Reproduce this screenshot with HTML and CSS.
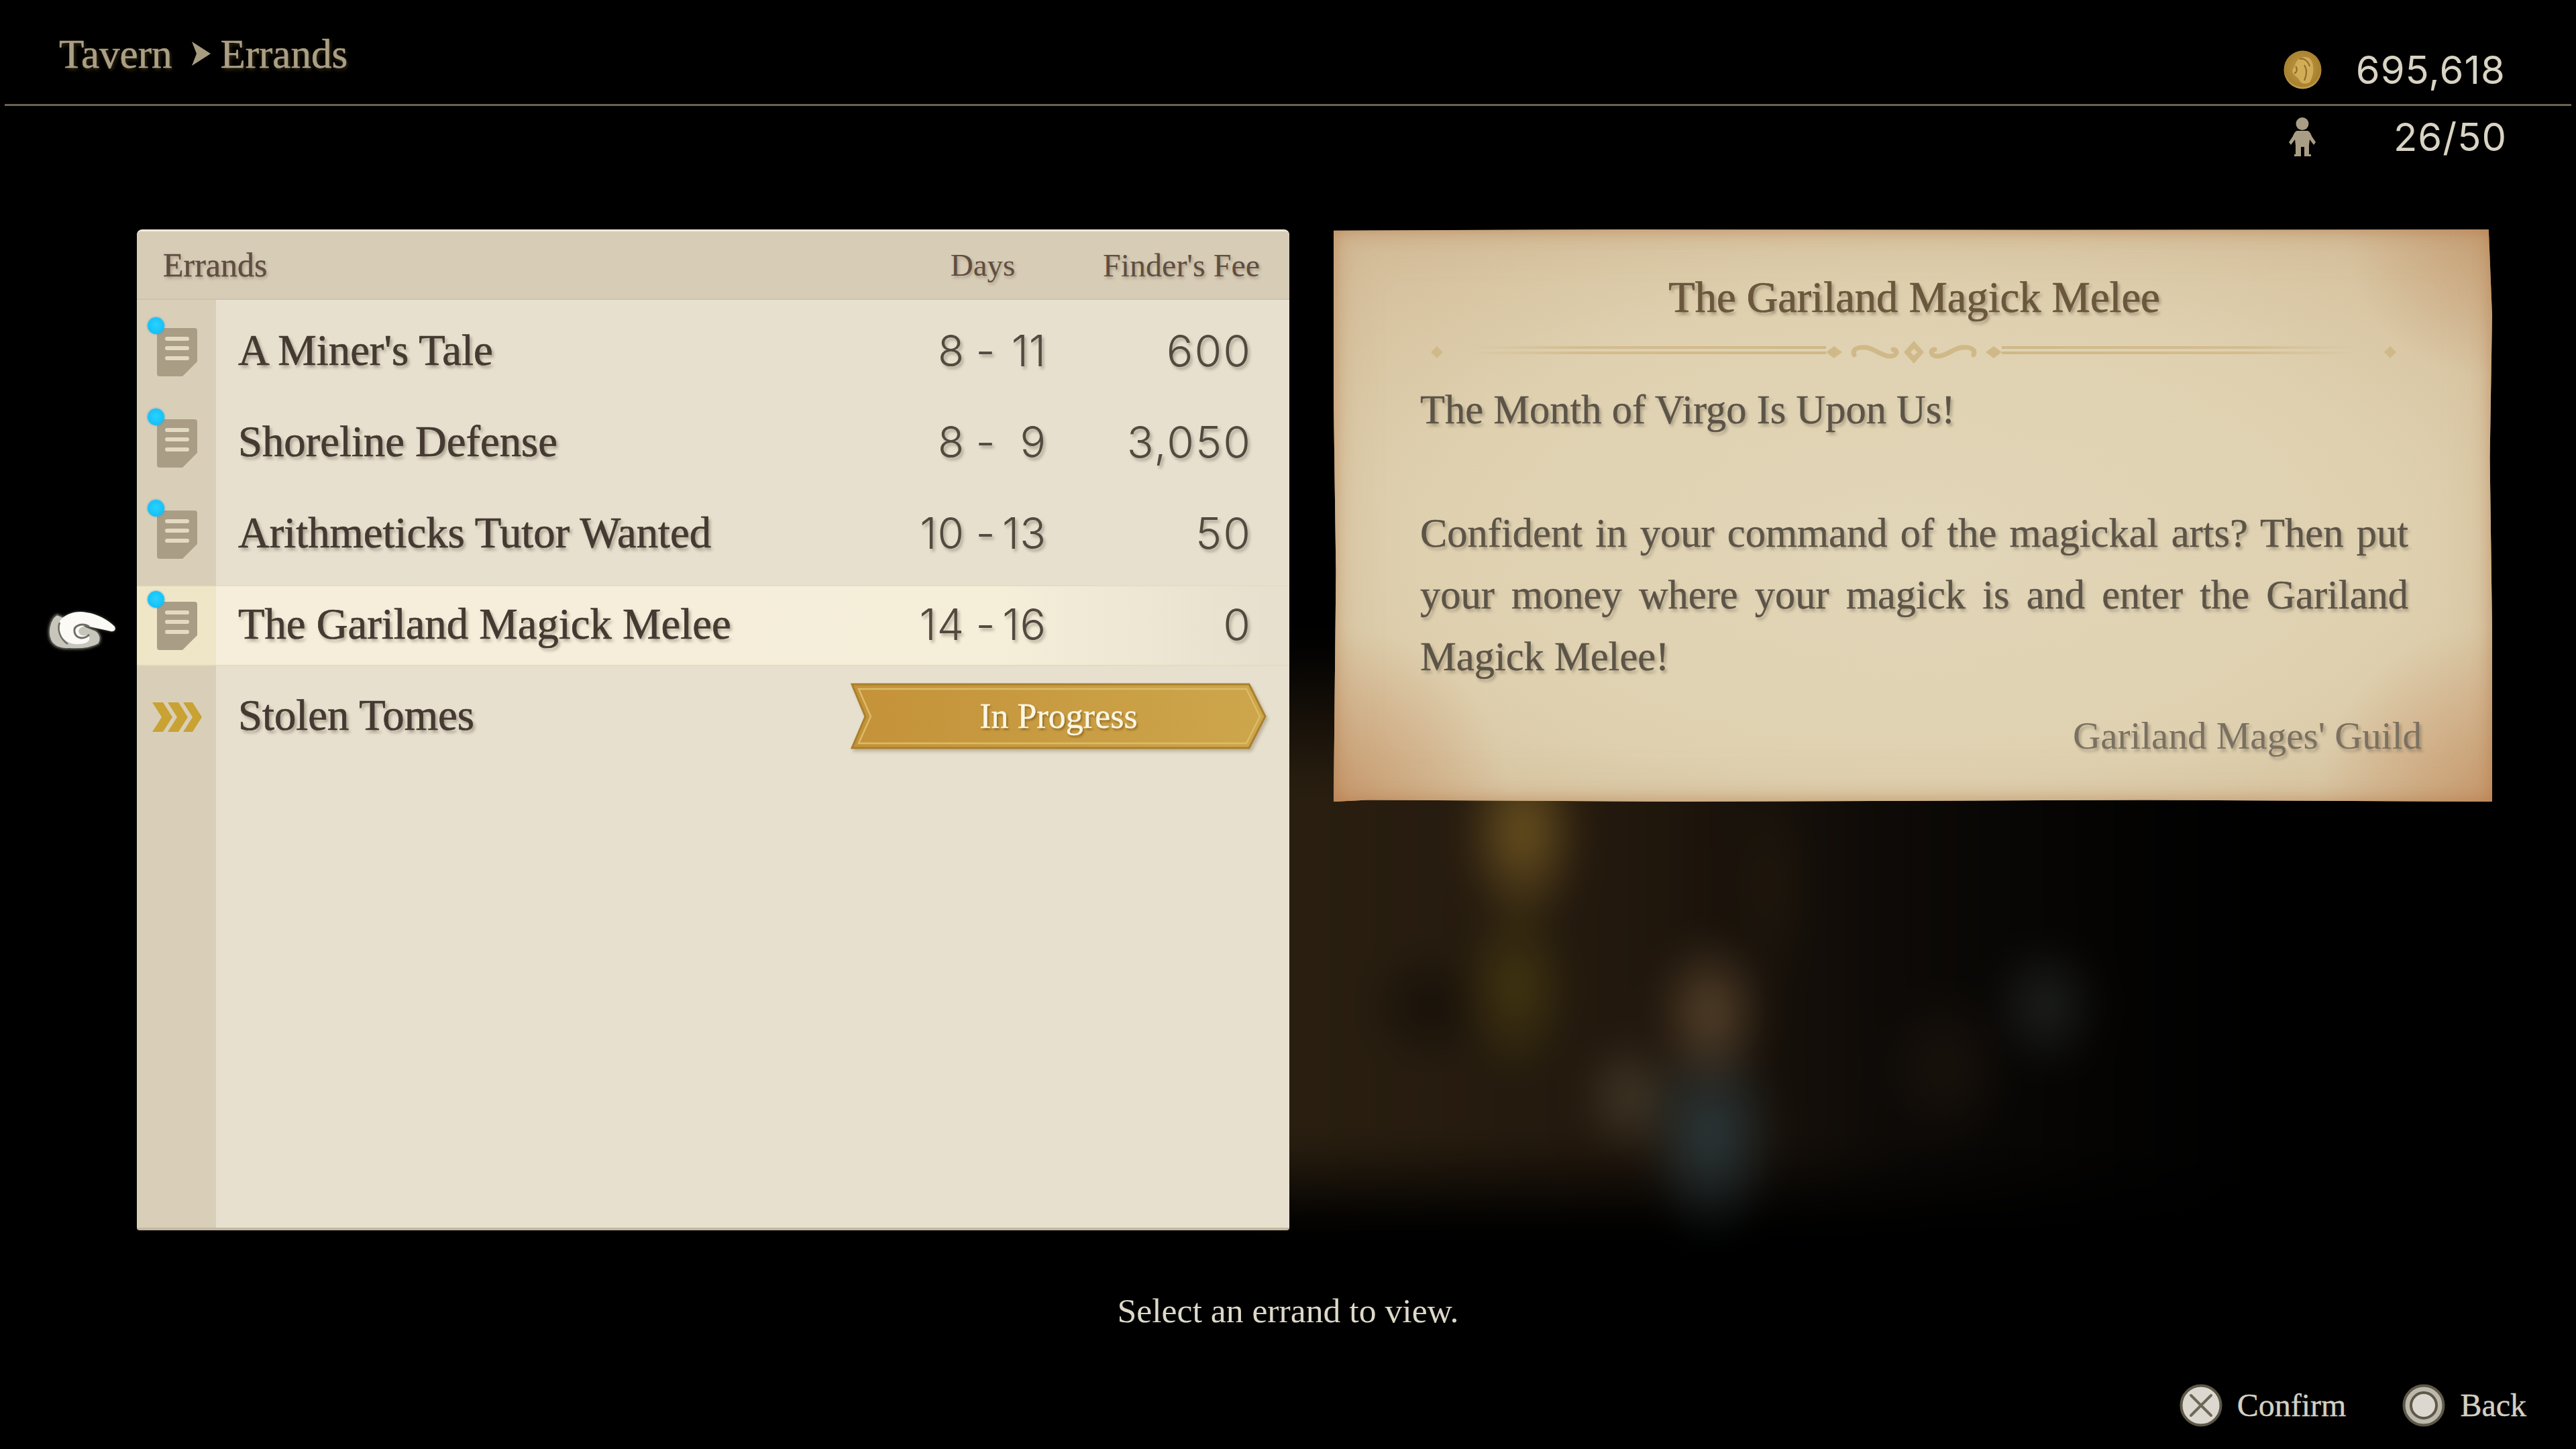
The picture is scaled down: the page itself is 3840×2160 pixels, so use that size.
FILE: index.html
```html
<!DOCTYPE html>
<html lang="en">
<head>
<meta charset="utf-8">
<title>Tavern - Errands</title>
<link rel="stylesheet" href="styles.css">
</head>
<body>
<svg class="defs" width="0" height="0" aria-hidden="true">
  <defs>
    <symbol id="doc" viewBox="0 0 60 72">
      <path d="M4 0H56a4 4 0 0 1 4 4V50L38 72H4a4 4 0 0 1-4-4V4a4 4 0 0 1 4-4Z" fill="#a99d85"/>
      <rect x="12" y="13" width="36" height="6" rx="3" fill="#e4dac3"/>
      <rect x="12" y="27" width="36" height="6" rx="3" fill="#e4dac3"/>
      <rect x="12" y="42" width="36" height="6" rx="3" fill="#e4dac3"/>
    </symbol>
  </defs>
</svg>
<div class="scene"></div>
<header class="topbar">
  <nav class="crumbs">
    <span>Tavern</span>
    <svg class="crumb-arrow" viewBox="0 0 28 36"><path d="M0 0L28 18L0 36L7 18Z" fill="#a89c80"/></svg>
    <span>Errands</span>
  </nav>
  <div class="stat stat-gil">
    <svg class="coin" viewBox="0 0 57 58">
      <defs><radialGradient id="gold" cx=".5" cy=".45" r=".6"><stop offset="0" stop-color="#c29a48"/><stop offset=".8" stop-color="#a8812f"/><stop offset="1" stop-color="#ecd27c"/></radialGradient></defs>
      <ellipse cx="28.500" cy="29" rx="28" ry="28.500" fill="url(#gold)"/>
      <path d="M14 34C12 28 16 26 18 20C21 10 34 7 40 13C47 22 45 38 39 48C32 51 26 50 24 45C22 41 17 38 14 34Z" fill="#d2ad58"/>
      <path d="M24 13C30 11 37 16 39 24M31 22C35 28 35 36 31 45M18 24C21 27 20 34 16 34" fill="none" stroke="#8d6a24" stroke-width="2"/>
    </svg>
    <span class="stat-value">695,618</span>
  </div>
</header>
<div class="rule"></div>
<div class="stat stat-party">
  <svg class="person" viewBox="0 0 42 58">
    <circle cx="21" cy="9.500" r="9.500" fill="#a99d85"/>
    <path d="M13 20H29C32 21 34 25 35 28L41 37L38 41L32 33L31 42V55H34V58H24V44H19V58H9V55H11V42L10 33L4 41L1 37L7 28C8 25 10 21 13 20Z" fill="#a99d85"/>
  </svg>
  <span class="stat-value">26/50</span>
</div>
<main class="content">
  <section class="panel">
    <div class="panel-head">
      <span class="head-name">Errands</span>
      <span class="head-days">Days</span>
      <span class="head-fee">Finder's Fee</span>
    </div>
    <div class="list">
      <div class="row">
        <div class="doc"><svg class="doc-icon"><use href="#doc"/></svg><i class="dot"></i></div>
        <span class="name">A Miner's Tale</span>
        <span class="days"><b>8</b><em>-</em><b>11</b></span>
        <span class="fee">600</span>
      </div>
      <div class="row">
        <div class="doc"><svg class="doc-icon"><use href="#doc"/></svg><i class="dot"></i></div>
        <span class="name">Shoreline Defense</span>
        <span class="days"><b>8</b><em>-</em><b>9</b></span>
        <span class="fee">3,050</span>
      </div>
      <div class="row">
        <div class="doc"><svg class="doc-icon"><use href="#doc"/></svg><i class="dot"></i></div>
        <span class="name">Arithmeticks Tutor Wanted</span>
        <span class="days"><b>10</b><em>-</em><b>13</b></span>
        <span class="fee">50</span>
      </div>
      <div class="row row-selected">
        <div class="doc"><svg class="doc-icon"><use href="#doc"/></svg><i class="dot"></i></div>
        <span class="name">The Gariland Magick Melee</span>
        <span class="days"><b>14</b><em>-</em><b>16</b></span>
        <span class="fee">0</span>
        <svg class="hand" viewBox="0 0 102 58">
          <path d="M14 6C3 12-1 32 4 44C8 54 20 58 32 57C50 58 66 56 76 50C80 44 80 36 72 30Z" fill="#c8c6bc" stroke="#4a4a44" stroke-width="2"/>
          <path d="M18 16C26 4 44 0 58 3C74 5 90 14 100 24C102 29 100 32 94 31C84 29 72 26 62 24C56 22 48 24 46 30C46 36 52 40 60 36C66 43 60 50 48 50C34 52 22 44 18 34Z" fill="#fbfaf5"/>
          <path d="M62 24C52 18 38 22 40 32C42 42 54 44 62 36" fill="none" stroke="#6f6e66" stroke-width="3"/>
          <path d="M18 18C14 28 18 42 30 50" fill="none" stroke="#6f6e66" stroke-width="2.500"/>
        </svg>
      </div>
      <div class="row row-active">
        <svg class="chevrons" viewBox="0 0 74 44">
          <path d="M0 0H16L30 22L16 44H0L14 22Z M23 0H39L53 22L39 44H23L37 22Z M46 0H60L74 22L60 44H46L60 22Z" fill="#c9a234"/>
        </svg>
        <span class="name">Stolen Tomes</span>
        <div class="badge">
          <svg class="badge-art" viewBox="0 0 616 95" preserveAspectRatio="none">
            <defs><linearGradient id="badgefill" x1="0" x2="1" y1="0" y2="0"><stop offset="0" stop-color="#c49239"/><stop offset="1" stop-color="#cda64b"/></linearGradient></defs>
            <path d="M0 0H592L616 48L592 95H0L20 48Z" fill="url(#badgefill)" stroke="#a9802e" stroke-width="3"/>
            <path d="M10 7H588L608 48L588 88H10L28 48Z" fill="none" stroke="#dcbb68" stroke-width="2.500"/>
          </svg>
          <span class="badge-text">In Progress</span>
        </div>
      </div>
    </div>
  </section>
  <article class="paper">
    <h1 class="paper-title">The Gariland Magick Melee</h1>
    <svg class="ornament" viewBox="0 0 1441 36">
      <defs>
        <linearGradient id="fadeL" x1="0" x2="1" y1="0" y2="0"><stop offset="0" stop-color="#d3bd90" stop-opacity="0"/><stop offset=".3" stop-color="#d3bd90"/><stop offset="1" stop-color="#cfb888"/></linearGradient>
        <linearGradient id="fadeR" x1="1" x2="0" y1="0" y2="0"><stop offset="0" stop-color="#d3bd90" stop-opacity="0"/><stop offset=".3" stop-color="#d3bd90"/><stop offset="1" stop-color="#cfb888"/></linearGradient>
      </defs>
      <g fill="#d0b988">
        <path d="M10 9L19 18L10 27L1 18Z"/>
        <path d="M1431 9L1440 18L1431 27L1422 18Z"/>
        <path d="M602 9L614 18L602 27L590 18Z"/>
        <path d="M840 9L852 18L840 27L828 18Z"/>
        <path fill-rule="evenodd" d="M721 1L736 18L721 35L706 18ZM721 13L716 18L721 23L726 18Z"/>
      </g>
      <g fill="none" stroke="#d0b988" stroke-width="7" stroke-linecap="round">
        <path d="M632 22C628 12 640 10 650 11C664 13 672 24 686 24C696 24 698 14 690 14"/>
        <path d="M810 22C814 12 802 10 792 11C778 13 770 24 756 24C746 24 744 14 752 14"/>
      </g>
      <rect x="60" y="9" width="530" height="4" fill="url(#fadeL)"/>
      <rect x="60" y="17" width="530" height="4" fill="url(#fadeL)"/>
      <rect x="852" y="9" width="530" height="4" fill="url(#fadeR)"/>
      <rect x="852" y="17" width="530" height="4" fill="url(#fadeR)"/>
    </svg>
    <div class="paper-body">
      <p class="line">The Month of Virgo Is Upon Us!</p>
      <p class="line line-blank">&nbsp;</p>
      <p class="line line-just">Confident in your command of the magickal arts? Then put</p>
      <p class="line line-just">your money where your magick is and enter the Gariland</p>
      <p class="line">Magick Melee!</p>
    </div>
    <p class="paper-sign">Gariland Mages' Guild</p>
  </article>
</main>
<p class="prompt">Select an errand to view.</p>
<footer class="hints">
  <div class="hint">
    <svg class="btn" viewBox="0 0 64 64"><circle cx="32" cy="32" r="29.500" fill="#dcd8cf" stroke="#5d5848" stroke-width="4"/><path d="M17 17L47 47M47 17L17 47" stroke="#6d6858" stroke-width="4" stroke-linecap="round"/></svg>
    <span>Confirm</span>
  </div>
  <div class="hint">
    <svg class="btn" viewBox="0 0 64 64"><circle cx="32" cy="32" r="29.500" fill="#bdb8ac" stroke="#5d5848" stroke-width="4"/><circle cx="32" cy="32" r="19" fill="#dcd8cf" stroke="#5d5848" stroke-width="4"/></svg>
    <span>Back</span>
  </div>
</footer>
</body>
</html>
```
FILE: styles.css
```css
* { box-sizing: border-box; }
html, body { margin: 0; padding: 0; }
body {
  position: relative;
  width: 3840px;
  height: 2160px;
  overflow: hidden;
  background: #000;
  font-family: "Liberation Serif", serif;
  display: flex;
  flex-direction: column;
}
.defs { position: absolute; }

.scene {
  position: absolute;
  left: 1880px;
  top: 900px;
  width: 1560px;
  height: 980px;
  filter: blur(22px);
  background:
    radial-gradient(ellipse 95px 150px at 390px 340px, rgba(125,96,36,.8), transparent),
    radial-gradient(ellipse 85px 140px at 380px 570px, rgba(76,64,16,.75), transparent),
    radial-gradient(ellipse 90px 120px at 670px 610px, rgba(92,70,46,.9), transparent),
    radial-gradient(ellipse 105px 160px at 670px 790px, rgba(44,58,62,.95), transparent),
    radial-gradient(ellipse 80px 95px at 550px 735px, rgba(70,60,44,.85), transparent),
    radial-gradient(ellipse 85px 100px at 1170px 600px, rgba(38,42,40,.75), transparent),
    radial-gradient(ellipse 100px 120px at 1020px 690px, rgba(36,26,16,.6), transparent),
    radial-gradient(ellipse 60px 170px at 760px 420px, rgba(38,28,16,.6), transparent),
    radial-gradient(ellipse 100px 90px at 250px 600px, rgba(0,0,0,.4), transparent),
    linear-gradient(to bottom, #000 5%, transparent 28%, transparent 82%, #000 95%),
    linear-gradient(to right, #2a1f10 0, #22180d 540px, #0d0a07 940px, #050403 1240px, #000 1490px);
}

.topbar {
  position: relative;
  height: 155px;
  display: flex;
  justify-content: space-between;
  align-items: flex-start;
  padding: 0 105px 0 88px;
}
.crumbs {
  display: flex;
  align-items: center;
  gap: 14px;
  height: 160px;
  font-size: 61px;
  line-height: 1;
  color: #ab9f83;
  -webkit-text-stroke: .6px currentColor;
  text-shadow: 2px 3px 5px rgba(110,90,50,.5);
}
.crumb-arrow { width: 28px; height: 36px; margin-left: 16px; }

.rule {
  position: relative;
  height: 3px;
  margin: 0 7px;
  background: #6c634f;
  flex: none;
}

.stat {
  position: relative;
  display: flex;
  align-items: center;
  justify-content: space-between;
}
.stat-gil {
  width: 331px;
  margin-top: 75px;
  height: 58px;
}
.stat-party {
  width: 326px;
  height: 58px;
  margin: 17px 103px 0 auto;
}
.stat-value {
  font-family: Inter, "Liberation Sans", sans-serif;
  font-weight: 400;
  font-size: 58px;
  line-height: 1;
  color: #d8d3c3;
  letter-spacing: 1px;
}
.coin { width: 57px; height: 58px; }
.person { width: 42px; height: 58px; }

.content {
  position: relative;
  display: flex;
  align-items: flex-start;
  margin-top: 109px;
  padding-left: 204px;
  gap: 66px;
  flex: none;
}

.panel {
  width: 1718px;
  height: 1492px;
  flex: none;
  border-radius: 8px 8px 4px 4px;
  background: #e7e0ce;
  border-top: 3px solid #f0eadc;
  border-bottom: 4px solid #c4b9a0;
  display: flex;
  flex-direction: column;
}
.panel-head {
  height: 102px;
  flex: none;
  display: grid;
  grid-template-columns: 39px 1fr 140px 363px;
  align-items: center;
  border-radius: 6px 6px 0 0;
  background: #d7ccb6;
  font-size: 50px;
  color: #5f4e42;
  text-shadow: 2px 3px 4px rgba(60,40,20,.3);
  border-bottom: 2px solid #cfc3aa;
}
.head-name { grid-column: 2; -webkit-text-stroke: .4px currentColor; }
.head-days { grid-column: 3; text-align: center; font-size: 47px; transform: translateX(-24px); }
.head-fee { grid-column: 4; text-align: right; padding-right: 44px; font-size: 48px; }

.list {
  flex: 1;
  padding-top: 19px;
  display: flex;
  flex-direction: column;
  gap: 19px;
  background: linear-gradient(to right, #d9cfb9 118px, #e7e0ce 118px);
}
.row {
  position: relative;
  height: 117px;
  flex: none;
  display: grid;
  grid-template-columns: 151px 1fr 306px 200px;
  align-items: center;
  padding-right: 56px;
}
.row-selected {
  background:
    linear-gradient(to right, #efe6c8 118px, #f6eedb 118px, #f5eed9 75%, rgba(245,238,217,0) 98%);
  box-shadow: 0 2px 0 rgba(232,216,170,.6), 0 -2px 0 rgba(232,216,170,.4);
}
.doc { position: relative; width: 60px; height: 72px; margin-left: 30px; }
.doc-icon { display: block; width: 60px; height: 72px; }
.dot {
  position: absolute;
  left: -14px;
  top: -16px;
  width: 25px;
  height: 25px;
  border-radius: 50%;
  background: radial-gradient(circle at 50% 45%, #2ad2ff 0, #14c0f6 70%, #3aa8d6 100%);
  box-shadow: 0 0 3px rgba(30,150,220,.8);
}
.name {
  font-size: 64.700px;
  line-height: 1;
  margin-bottom: 5px;
  color: #443a31;
  -webkit-text-stroke: .7px currentColor;
  text-shadow: 3px 4px 4px rgba(50,35,20,.35);
  white-space: nowrap;
}
.days {
  width: 200px;
  margin-bottom: 3px;
  display: grid;
  grid-template-columns: 78px 1fr 73px;
  font-family: Inter, "Liberation Sans", sans-serif;
  font-weight: 300;
  font-size: 64px;
  line-height: 1;
  color: #52493f;
  letter-spacing: 1px;
  text-shadow: 3px 4px 4px rgba(50,35,20,.3);
}
.days b { font-weight: 300; text-align: right; white-space: nowrap; }
.days em { font-style: normal; text-align: center; padding-left: 14px; }
.fee {
  margin-bottom: 3px;
  font-family: Inter, "Liberation Sans", sans-serif;
  font-weight: 300;
  font-size: 66px;
  line-height: 1;
  letter-spacing: 2px;
  color: #52493f;
  text-align: right;
  text-shadow: 3px 4px 4px rgba(50,35,20,.3);
}
.hand {
  position: absolute;
  left: -133px;
  top: 36px;
  width: 102px;
  height: 58px;
  filter: drop-shadow(0 0 2px rgba(120,120,110,.7));
}
.row-active {
  grid-template-columns: 151px 1fr 616px;
  padding-right: 36px;
}
.chevrons { width: 74px; height: 44px; margin-left: 23px; }
.badge {
  position: relative;
  height: 95px;
  width: 616px;
  display: flex;
  align-items: center;
  justify-content: center;
  margin-top: -2px;
  filter: drop-shadow(3px 4px 2px rgba(70,50,20,.25));
}
.badge-art { position: absolute; left: 0; top: 0; width: 616px; height: 95px; overflow: visible; }
.badge-text {
  position: relative;
  font-size: 52px;
  line-height: 1;
  color: #fbf6e3;
  -webkit-text-stroke: .4px currentColor;
  text-shadow: 2px 3px 3px rgba(90,60,10,.5);
}

.paper {
  width: 1727px;
  height: 853px;
  flex: none;
  padding: 0 125px 0 129px;
  display: flex;
  flex-direction: column;
  background:
    radial-gradient(circle 260px at 0 100%, rgba(190,125,75,.55), transparent),
    radial-gradient(circle 260px at 100% 100%, rgba(190,125,75,.55), transparent),
    radial-gradient(circle 220px at 100% 0, rgba(180,120,70,.4), transparent),
    radial-gradient(ellipse 75% 75% at 50% 55%, #e2d6b9 0, #dfd1b0 55%, rgba(210,186,150,0) 100%),
    #d2ba96;
  box-shadow: inset 0 0 26px rgba(175,105,55,.55), inset 0 0 80px rgba(180,130,80,.2);
  clip-path: polygon(0 .2%, 25% 0, 60% .1%, 99.7% 0, 100% 15%, 99.8% 40%, 100% 70%, 100% 100%, 70% 99.7%, 30% 100%, 3% 99.7%, 0 100%, .2% 60%, 0 30%);
}
.paper-title {
  margin: 65px 0 0 0;
  font-size: 64.500px;
  font-weight: 400;
  line-height: 74px;
  text-align: center;
  color: #6a573c;
  -webkit-text-stroke: .7px currentColor;
  text-shadow: 3px 4px 4px rgba(50,35,20,.35);
}
.ornament {
  width: 1441px;
  height: 36px;
  flex: none;
  margin: 26px 0 0 15px;
}
.paper-body {
  margin-top: 22px;
  width: 1473px;
  font-size: 60.500px;
  line-height: 92px;
  color: #5d5448;
  -webkit-text-stroke: .4px currentColor;
  text-shadow: 3px 4px 4px rgba(50,35,20,.3);
}
.line { margin: 0; white-space: nowrap; }
.line-just { text-align: justify; text-align-last: justify; white-space: normal; }
.paper-sign {
  margin: 32px -20px 0 0;
  text-align: right;
  font-size: 57px;
  line-height: 80px;
  color: #7b7162;
  text-shadow: 3px 4px 4px rgba(50,35,20,.3);
}

.prompt {
  position: relative;
  margin: 92px 0 0 0;
  text-align: center;
  font-size: 51.700px;
  line-height: 56px;
  color: #ddd8c8;
}
.hints {
  position: relative;
  display: flex;
  justify-content: flex-end;
  gap: 84px;
  margin-top: 81px;
  padding-right: 74px;
}
.hint {
  display: flex;
  align-items: center;
  gap: 22px;
  font-size: 48px;
  line-height: 64px;
  color: #d3cfc2;
  -webkit-text-stroke: .4px currentColor;
}
.btn { width: 64px; height: 64px; }
```
